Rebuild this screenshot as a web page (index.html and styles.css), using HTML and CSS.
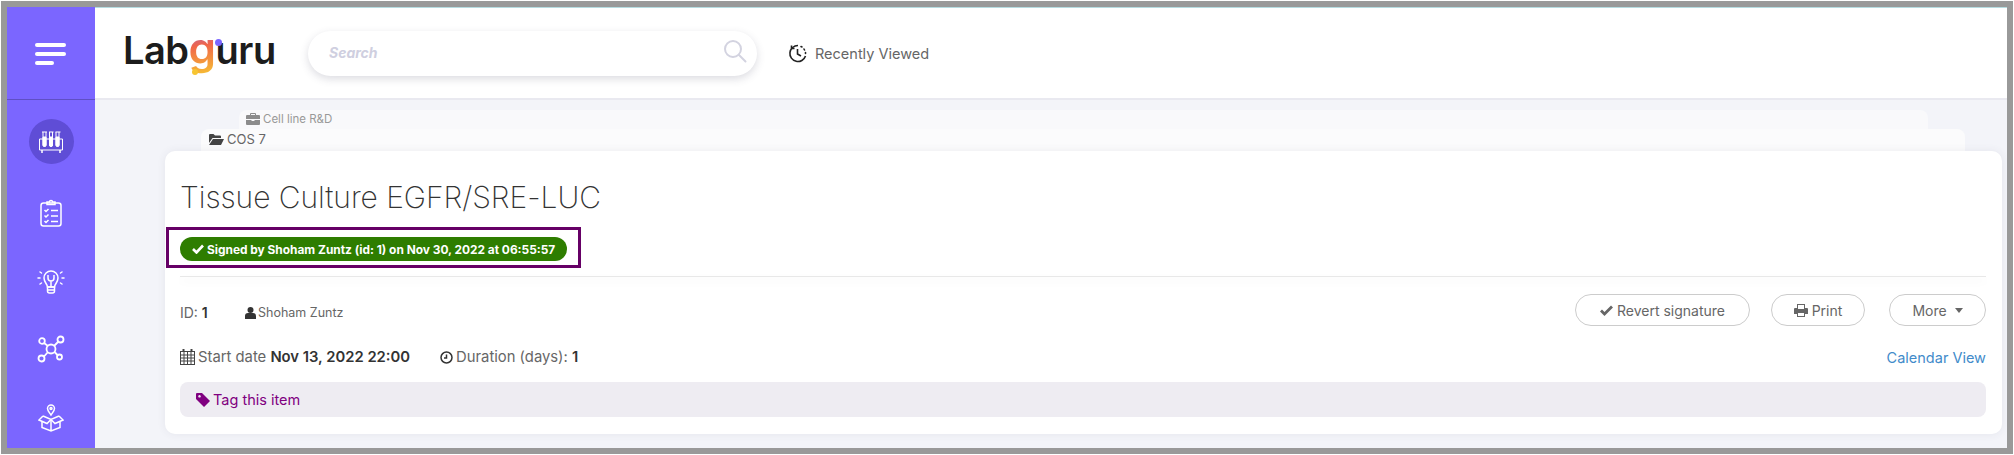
FILE: index.html
```html
<!DOCTYPE html>
<html lang="en">
<head>
  <meta charset="UTF-8">
  <title>Labguru</title>
  <link rel="stylesheet" href="styles.css">
</head>
<body>
  <div class="window">
    <aside class="sidebar">
      <div class="sidebar-top">
        <span class="burger burger-long"></span>
        <span class="burger burger-long"></span>
        <span class="burger burger-short"></span>
      </div>
      <nav class="sidebar-nav">
        <a class="nav-item active">
          <svg width="26" height="24" viewBox="0 0 26 24" fill="none" stroke="#fff" stroke-width="1">
            <path d="M4 2h5M11 2h4.500M17.500 2h5"/>
            <path d="M5 2v13a1.500 1.500 0 0 0 3 0V2M11.500 2v13a1.500 1.500 0 0 0 3 0V2M18 2v13a1.500 1.500 0 0 0 3 0V2"/>
            <path d="M5 7h3v8a1.500 1.500 0 0 1-3 0zM11.500 7h3v8a1.500 1.500 0 0 1-3 0zM18 7h3v8a1.500 1.500 0 0 1-3 0z" fill="#fff"/>
            <path d="M5 9H1.500v11h23V9H21M8 9h3.500M14.500 9H18"/>
            <path d="M4 20v3M22 20v3" stroke-width="1.500"/>
          </svg>
        </a>
        <a class="nav-item">
          <svg width="24" height="28" viewBox="0 0 24 28" fill="none" stroke="#fff" stroke-width="1.500">
            <rect x="2" y="4" width="20" height="23" rx="2.500"/>
            <path d="M8 5V3h2.500a1.500 1.500 0 0 1 3 0H16v2.500H8z"/>
            <path d="M5.500 11l1.500 1.500 2.500-2.500M5.500 16.500l1.500 1.500 2.500-2.500M5.500 22l1.500 1.500 2.500-2.500M12 11.500h7M12 17h7M12 22.500h7"/>
          </svg>
        </a>
        <a class="nav-item">
          <svg width="28" height="28" viewBox="0 0 28 28" fill="none" stroke="#fff" stroke-width="1.500">
            <path d="M10.500 20c0-3-3.500-4.500-3.500-9a7 7 0 0 1 14 0c0 4.500-3.500 6-3.500 9z"/>
            <path d="M10.500 20h7v4a2 2 0 0 1-2 2h-3a2 2 0 0 1-2-2zM10.500 23h7"/>
            <path d="M11 8v3a3 3 0 0 0 6 0V8M14 14v6"/>
            <path d="M1 11h2M25 11h2M3 5l1.500 1M25 5l-1.500 1M3 17l1.500-1M25 17l-1.500-1" stroke-linecap="round"/>
          </svg>
        </a>
        <a class="nav-item">
          <svg width="28" height="28" viewBox="0 0 28 28" fill="none" stroke="#fff" stroke-width="1.800">
            <circle cx="14" cy="14" r="4.500"/>
            <circle cx="5" cy="6" r="2.800"/>
            <circle cx="23.500" cy="4.500" r="3"/>
            <circle cx="4.500" cy="23.500" r="3"/>
            <circle cx="22.500" cy="22" r="2.500"/>
            <path d="M7 8l4 3M21.500 6.500L17 11M7 21.500l4-4.500M20.500 20L17.500 17"/>
          </svg>
        </a>
        <a class="nav-item">
          <svg width="26" height="30" viewBox="0 0 26 30" fill="none" stroke="#fff" stroke-width="1.500">
            <path d="M13 13c-2-3-3.500-4.500-3.500-6.500a3.500 3.500 0 0 1 7 0c0 2-1.500 3.500-3.500 6.500z"/>
            <circle cx="13" cy="6.500" r="1"/>
            <path d="M5 14l8 3.500 8-3.500M5 14l-4 4 8 3.500 4-4 4 4 8-3.500-4-4"/>
            <path d="M4 20v5.500l9 3.500 9-3.500V20M13 18v11"/>
          </svg>
        </a>
      </nav>
    </aside>

    <div class="main">
      <header class="topbar">
        <div class="logo">Lab<span class="logo-g">g</span>uru<span class="logo-dot logo-dot-purple"></span><span class="logo-dot logo-dot-yellow"></span></div>
        <div class="search">
          <span class="search-text">Search</span>
          <svg class="search-icon" width="24" height="24" viewBox="0 0 24 24" fill="none" stroke="#d3d3e0" stroke-width="2">
            <circle cx="10" cy="10" r="8"/>
            <path d="M16 16l6.500 6.500" stroke-linecap="round"/>
          </svg>
        </div>
        <div class="recent">
          <svg width="19" height="19" viewBox="0 0 19 19" fill="none" stroke="#222" stroke-width="1.600">
            <path d="M10 1.500a8 8 0 1 0 7.500 10.500"/>
            <path d="M3.500 1.500v3h3M9.500 5v5l3.500 2"/>
            <path d="M13 2.500l1 .5M16 5l.5 1M17.500 8.500v1" stroke-linecap="round"/>
          </svg>
          <span>Recently Viewed</span>
        </div>
      </header>

      <div class="content">
        <div class="crumb crumb-project">
          <svg width="14" height="12" viewBox="0 0 14 12" fill="#8c8c8c">
            <path d="M5 0h4a1 1 0 0 1 1 1v1h3a1 1 0 0 1 1 1v3H0V3a1 1 0 0 1 1-1h3V1a1 1 0 0 1 1-1zm0 1v1h4V1zM0 7h5.500v1h3V7H14v4a1 1 0 0 1-1 1H1a1 1 0 0 1-1-1z"/>
          </svg>
          <span>Cell line R&amp;D</span>
        </div>
        <div class="crumb crumb-folder">
          <svg width="15" height="11" viewBox="0 0 15 11" fill="#444">
            <path d="M0 1a1 1 0 0 1 1-1h3.500l1.500 1.500h5a1 1 0 0 1 1 1V4H3.500L0 9zM4 5h11l-3 6H0z"/>
          </svg>
          <span>COS 7</span>
        </div>

        <section class="card">
          <h1 class="title">Tissue Culture EGFR/SRE-LUC</h1>
          <div class="signed-box">
            <span class="signed-pill">
              <svg width="12" height="10" viewBox="0 0 12 10" fill="none" stroke="#fff" stroke-width="2.600"><path d="M1 5l3.500 3.500L11 1.500"/></svg>
              <span>Signed by Shoham Zuntz (id: 1) on Nov 30, 2022 at 06:55:57</span>
            </span>
          </div>
          <div class="divider"></div>

          <div class="row row-meta">
            <div class="meta-left">
              <span class="item-id">ID: <b>1</b></span>
              <span class="owner">
                <svg width="11" height="12" viewBox="0 0 11 12" fill="#333"><circle cx="5.500" cy="3" r="3"/><path d="M0 12V9a3 3 0 0 1 3-3h5a3 3 0 0 1 3 3v3z"/></svg>
                <span>Shoham Zuntz</span>
              </span>
            </div>
            <div class="actions">
              <a class="btn btn-revert">
                <svg width="13" height="11" viewBox="0 0 13 11" fill="none" stroke="#666" stroke-width="2.800"><path d="M1 5.500l3.500 3.500L12 1.500"/></svg>
                <span>Revert signature</span>
              </a>
              <a class="btn btn-print">
                <svg width="14" height="13" viewBox="0 0 14 13" fill="#666"><path d="M3 0h8v4h2a1 1 0 0 1 1 1v5h-3v3H3v-3H0V5a1 1 0 0 1 1-1h2zm1 1v4h6V1zm0 8v3h6V9z" fill-rule="evenodd"/></svg>
                <span>Print</span>
              </a>
              <a class="btn btn-more"><span>More</span> <span class="caret"></span></a>
            </div>
          </div>

          <div class="row row-dates">
            <div class="meta-left">
              <span class="date">
                <svg width="15" height="16" viewBox="0 0 15 16" fill="none" stroke="#444" stroke-width="1"><rect x=".5" y="2.500" width="14" height="13"/><path d="M.5 6h14M.5 9h14M.5 12h14M4 2.500v13M7.500 2.500v13M11 2.500v13"/><path d="M3.500 0v3M11.500 0v3" stroke-width="2"/></svg>
                <span>Start date <b>Nov 13, 2022 22:00</b></span>
              </span>
              <span class="duration">
                <svg width="13" height="13" viewBox="0 0 13 13" fill="none" stroke="#333" stroke-width="1.500"><circle cx="6.500" cy="6.500" r="5.500"/><path d="M6.500 3.500v3.500h-2.500"/></svg>
                <span>Duration (days): <b>1</b></span>
              </span>
            </div>
            <a class="calendar-link">Calendar View</a>
          </div>

          <div class="tag-bar">
            <svg width="14" height="14" viewBox="0 0 14 14" fill="#800080"><path d="M0 1a1 1 0 0 1 1-1h5l8 8-6 6-8-8zm3.500 1a1.300 1.300 0 1 0 .01 0z" fill-rule="evenodd"/></svg>
            <span>Tag this item</span>
          </div>
        </section>
      </div>
    </div>
  </div>
</body>
</html>
```

FILE: styles.css
```css
* {
  box-sizing: border-box;
}
html, body {
  margin: 0;
  height: 100%;
}
body {
  padding: 1px;
  background-color: #fff;
  font-family: Inter, "Open Sans", sans-serif;
  color: #666;
  overflow: hidden;
}
a {
  text-decoration: none;
}
b {
  color: #333;
  font-weight: 600;
}
svg {
  flex-shrink: 0;
}
.window {
  display: flex;
  height: 453px;
  border: 6px solid #999;
  overflow: hidden;
  background-color: #f3f4f9;
}

/* sidebar */
.sidebar {
  width: 88px;
  flex-shrink: 0;
  background-color: #7b66ff;
}
.sidebar-top {
  height: 93px;
  border-bottom: 1px solid #5f4fc4;
  display: flex;
  flex-direction: column;
  justify-content: center;
  gap: 5px;
  padding-left: 28px;
  padding-top: 2px;
}
.burger {
  display: block;
  height: 4px;
  border-radius: 2px;
  background-color: #fff;
}
.burger-long {
  width: 31px;
}
.burger-short {
  width: 19px;
}
.sidebar-nav {
  display: flex;
  flex-direction: column;
  align-items: center;
  padding-top: 19px;
  gap: 23px;
}
.nav-item {
  width: 45px;
  height: 45px;
  display: flex;
  align-items: center;
  justify-content: center;
  border-radius: 50%;
}
.nav-item.active {
  background-color: #5f4dd6;
  margin-bottom: 3px;
}

/* top bar */
.main {
  flex: 1;
  min-width: 0;
  display: flex;
  flex-direction: column;
}
.topbar {
  height: 93px;
  flex-shrink: 0;
  display: flex;
  align-items: center;
  background-color: #fff;
  border-top: 1px solid #b5dce0;
  border-bottom: 2px solid #e9e9f0;
  padding-left: 28px;
}
.logo {
  position: relative;
  width: 185px;
  font-size: 38px;
  font-weight: 600;
  letter-spacing: -0.5px;
  line-height: 46px;
  color: #1c1c1c;
  margin-top: -6px;
}
.logo-g {
  font-size: 44px;
  line-height: 0;
  background: linear-gradient(170deg, #7b66ff 0%, #f0654a 45%, #f7c531 100%);
  -webkit-background-clip: text;
  background-clip: text;
  color: transparent;
}
.logo-dot {
  position: absolute;
  border-radius: 50%;
}
.logo-dot-purple {
  left: 92px;
  top: 12px;
  width: 7px;
  height: 7px;
  background-color: #7b66ff;
}
.logo-dot-yellow {
  left: 69px;
  top: 42px;
  width: 6px;
  height: 6px;
  background-color: #f7c531;
}
.search {
  width: 449px;
  height: 45px;
  display: flex;
  align-items: center;
  justify-content: space-between;
  padding: 0 10px 0 21px;
  border-radius: 23px;
  background-color: #fff;
  box-shadow: 0 3px 8px rgba(60, 60, 90, 0.18);
}
.search-text {
  font-size: 14px;
  font-weight: 700;
  font-style: italic;
  color: #cfcfe0;
  margin-bottom: 2px;
}
.search-icon {
  margin-bottom: 4px;
}
.recent {
  display: flex;
  align-items: center;
  gap: 8px;
  margin-left: 31px;
  font-size: 14.500px;
  color: #666;
}

/* content */
.content {
  flex: 1;
  min-height: 0;
  padding-top: 10px;
}
.crumb {
  display: flex;
  align-items: center;
  gap: 3px;
  padding-bottom: 2px;
  border-radius: 8px 8px 0 0;
}
.crumb-project {
  height: 19px;
  margin: 0 79px 0 144px;
  padding-left: 7px;
  font-size: 11.500px;
  color: #999;
  background-color: #f9f9fb;
}
.crumb-folder {
  height: 22px;
  margin: 0 42px 0 106px;
  padding-left: 8px;
  font-size: 13px;
  color: #666;
  background-color: #fbfbfc;
}
.card {
  height: 283px;
  margin: 0 5px 0 70px;
  padding: 27px 16px 0 15px;
  background-color: #fff;
  border-radius: 10px;
  box-shadow: 0 0 8px rgba(60, 60, 90, 0.08);
}
.title {
  margin: 0;
  font-size: 30px;
  font-weight: 200;
  letter-spacing: -0.05px;
  line-height: 38px;
  color: #333;
}
.signed-box {
  width: 415px;
  height: 41px;
  margin: 11px 0 0 -14px;
  padding: 7px 0 0 11px;
  border: 3px solid #660066;
}
.signed-pill {
  display: flex;
  align-items: center;
  gap: 3px;
  width: 387px;
  height: 24px;
  padding-left: 12px;
  border-radius: 12px;
  background-color: #2e7d00;
  color: #fff;
  font-size: 11.900px;
  font-weight: 700;
  white-space: nowrap;
}
.divider {
  height: 1px;
  margin-top: 8px;
  background-color: #e8e8e8;
  box-shadow: 0 4px 8px rgba(60, 60, 90, 0.1);
}
.row {
  display: flex;
  align-items: center;
  justify-content: space-between;
}
.meta-left {
  display: flex;
  align-items: center;
}
.row-meta {
  height: 32px;
  margin-top: 17px;
}
.row-meta .meta-left {
  margin-top: 5px;
}
.row-dates {
  height: 24px;
  margin-top: 19px;
}
.item-id {
  width: 65px;
  font-size: 14px;
}
.owner {
  display: flex;
  align-items: center;
  gap: 2px;
  font-size: 12.500px;
}
.actions {
  display: flex;
  gap: 21px;
}
.btn {
  display: flex;
  align-items: center;
  justify-content: center;
  gap: 4px;
  height: 32px;
  border: 1px solid #ccc;
  border-radius: 16px;
  font-size: 14px;
  color: #666;
}
.btn-revert {
  width: 175px;
}
.btn-print {
  width: 94px;
}
.btn-more {
  width: 97px;
  gap: 8px;
  margin-left: 3px;
}
.caret {
  border: 4px solid transparent;
  border-top: 5px solid #666;
  border-bottom: 0;
}
.date, .duration {
  display: flex;
  align-items: center;
  gap: 3px;
  font-size: 14.800px;
}
.duration {
  margin-left: 30px;
}
.calendar-link {
  font-size: 14.500px;
  color: #428bca;
}
.tag-bar {
  display: flex;
  align-items: center;
  gap: 3px;
  height: 35px;
  margin-top: 13px;
  padding-left: 16px;
  border-radius: 8px;
  background-color: #eeecf2;
  color: #800080;
  font-size: 14.500px;
}
```
